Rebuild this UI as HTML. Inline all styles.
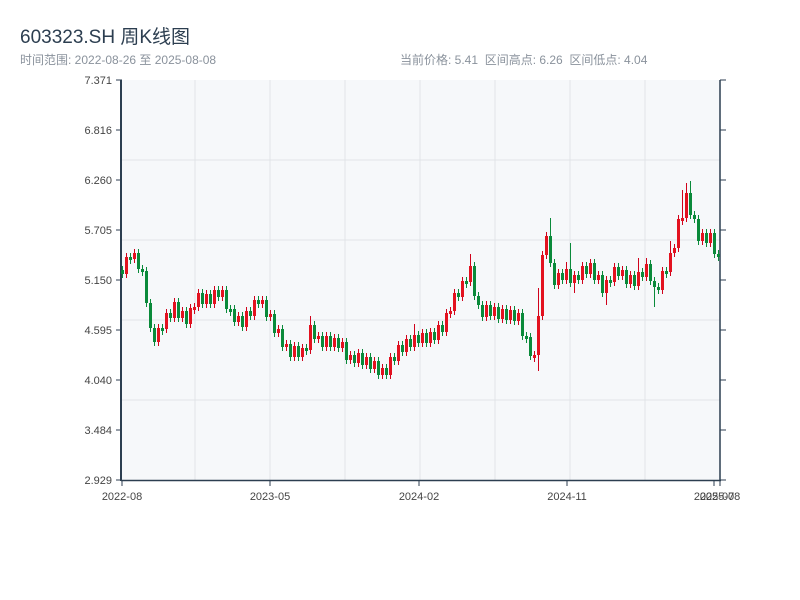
<!DOCTYPE html>
<html><head><meta charset="utf-8"><style>
body{margin:0;background:#fff;width:800px;height:600px;overflow:hidden;font-family:"Liberation Sans","Noto Sans CJK SC",sans-serif}
.t{position:absolute;left:20px;top:22px;font-size:19px;color:#2c3e50}
.s{position:absolute;top:51px;font-size:12px;color:#8a929c}
svg{position:absolute;left:0;top:0}
</style></head><body>
<div class="t">603323.SH 周K线图</div>
<div class="s" style="left:20px">时间范围: 2022-08-26 至 2025-08-08</div>
<div class="s" style="left:400px">当前价格: 5.41&nbsp;&nbsp;区间高点: 6.26&nbsp;&nbsp;区间低点: 4.04</div>
<svg width="800" height="600" font-family="Liberation Sans, sans-serif" font-size="11" fill="#444">
<rect x="122" y="80" width="598" height="400" fill="#f6f8fa"/>
<g stroke="#e1e4e8">
<path d="M122 160H720M122 240H720M122 320H720M122 400H720M195 80V480M270 80V480M345 80V480M420 80V480M495 80V480M570 80V480M645 80V480"/>
</g>
<g stroke="#2c3e50">
<path d="M116 80H122M116 130H122M116 180H122M116 230H122M116 280H122M116 330H122M116 380H122M116 430H122M116 480H122M720 80H726M720 130H726M720 180H726M720 230H726M720 280H726M720 330H726M720 380H726M720 430H726M720 480H726M122 480V486M270 480V486M419 480V486M567 480V486M714 480V486M720 480V486"/>
<path d="M121 80V481" stroke-width="2"/>
<path d="M720 80V481M121 480.5H721" stroke-width="1.5"/>
</g>
<g text-anchor="end">
<text x="112" y="84">7.371</text><text x="112" y="134">6.816</text><text x="112" y="184">6.260</text><text x="112" y="234">5.705</text><text x="112" y="284">5.150</text><text x="112" y="334">4.595</text><text x="112" y="384">4.040</text><text x="112" y="434">3.484</text><text x="112" y="484">2.929</text>
</g>
<g text-anchor="middle">
<text x="122" y="500">2022-08</text><text x="270" y="500">2023-05</text><text x="419" y="500">2024-02</text><text x="567" y="500">2024-11</text><text x="714" y="500">2025-07</text><text x="720" y="500">2025-08</text>
</g>
<g stroke="#0a8a3a" fill="none">
<path stroke-width="1" d="M122.5 266V278M130.5 253V264M138.5 249V273M142.5 265V276M146.5 267V307M150.5 299V332M154.5 324V346M162.5 324V335M170.5 309V322M178.5 298V322M186.5 307V328M202.5 289V308M210.5 290V308M218.5 286V301M226.5 286V313M230.5 305V316M234.5 305V326M242.5 312V331M250.5 307V320M258.5 296V308M266.5 296V321M274.5 310V337M282.5 325V351M290.5 340V361M298.5 342V361M306.5 344V355M314.5 321V343M322.5 332V351M330.5 332V351M338.5 334V352M346.5 338V364M354.5 351V367M362.5 349V369M370.5 353V373M378.5 357V379M386.5 364V379M394.5 353V365M402.5 341V356M410.5 335V351M418.5 331V347M426.5 329V347M434.5 328V344M442.5 321V336M458.5 289V301M466.5 277V288M474.5 262V300M478.5 292V309M482.5 301V321M490.5 301V320M498.5 303V323M506.5 305V324M514.5 306V325M522.5 309V340M526.5 332V343M530.5 333V360M550.5 218V267M554.5 259V289M562.5 269V284M570.5 243V287M578.5 271V284M586.5 262V278M594.5 259V284M602.5 271V297M610.5 276V287M618.5 263V280M626.5 266V288M634.5 271V290M642.5 268V281M650.5 260V285M654.5 277V307M658.5 283V294M666.5 267V278M690.5 181V219M694.5 211V223M698.5 215V245M706.5 229V247M714.5 229V258M718.5 250V261"/>
<path stroke-width="3" d="M122.5 270V274M130.5 257V260M138.5 253V269M142.5 269V272M146.5 271V303M150.5 303V328M154.5 328V342M162.5 328V331M170.5 313V318M178.5 302V318M186.5 311V324M202.5 293V304M210.5 294V304M218.5 290V297M226.5 290V309M230.5 309V312M234.5 309V322M242.5 316V327M250.5 311V316M258.5 300V304M266.5 300V317M274.5 314V333M282.5 329V347M290.5 344V357M298.5 346V357M306.5 348V351M314.5 325V339M322.5 336V347M330.5 336V347M338.5 338V348M346.5 342V360M354.5 355V363M362.5 353V365M370.5 357V369M378.5 361V375M386.5 368V375M394.5 357V361M402.5 345V352M410.5 339V347M418.5 335V343M426.5 333V343M434.5 332V340M442.5 325V332M458.5 293V297M466.5 281V284M474.5 266V296M478.5 296V305M482.5 305V317M490.5 305V316M498.5 307V319M506.5 309V320M514.5 310V321M522.5 313V336M526.5 336V339M530.5 337V356M550.5 236V263M554.5 263V285M562.5 273V280M570.5 269V283M578.5 275V280M586.5 266V274M594.5 263V280M602.5 275V293M610.5 280V283M618.5 267V276M626.5 270V284M634.5 275V286M642.5 272V277M650.5 264V281M654.5 281V287M658.5 287V290M666.5 271V274M690.5 193V215M694.5 215V219M698.5 219V241M706.5 233V243M714.5 233V254M718.5 254V257"/>
</g>
<g stroke="#d0021b" fill="none">
<path stroke-width="1" d="M126.5 253V278M134.5 249V263M158.5 324V346M166.5 309V333M174.5 298V322M182.5 307V322M190.5 304V328M194.5 303V314M198.5 289V311M206.5 290V308M214.5 286V308M222.5 286V301M238.5 312V326M246.5 307V331M254.5 296V320M262.5 296V308M270.5 310V321M278.5 325V337M286.5 340V351M294.5 342V361M302.5 344V361M310.5 316V354M318.5 332V343M326.5 332V351M334.5 334V351M342.5 338V352M350.5 351V364M358.5 349V367M366.5 353V369M374.5 357V373M382.5 364V379M390.5 353V379M398.5 341V365M406.5 335V356M414.5 324V351M422.5 329V347M430.5 328V347M438.5 321V344M446.5 309V336M450.5 307V318M454.5 289V315M462.5 277V301M470.5 254V286M486.5 301V321M494.5 303V320M502.5 305V323M510.5 306V324M518.5 309V325M534.5 351V362M538.5 288V371M542.5 251V320M546.5 232V259M558.5 269V289M566.5 262V284M574.5 271V293M582.5 262V284M590.5 259V278M598.5 271V284M606.5 276V305M614.5 263V286M622.5 266V280M630.5 271V288M638.5 258V290M646.5 258V281M662.5 267V294M670.5 241V276M674.5 244V257M678.5 215V252M682.5 190V225M686.5 183V222M702.5 229V245M710.5 229V247"/>
<path stroke-width="3" stroke="#e3121f" d="M126.5 257V274M134.5 253V259M158.5 328V342M166.5 313V329M174.5 302V318M182.5 311V318M190.5 308V324M194.5 307V310M198.5 293V307M206.5 294V304M214.5 290V304M222.5 290V297M238.5 316V322M246.5 311V327M254.5 300V316M262.5 300V304M270.5 314V317M278.5 329V333M286.5 344V347M294.5 346V357M302.5 348V357M310.5 325V350M318.5 336V339M326.5 336V347M334.5 338V347M342.5 342V348M350.5 355V360M358.5 353V363M366.5 357V365M374.5 361V369M382.5 368V375M390.5 357V375M398.5 345V361M406.5 339V352M414.5 335V347M422.5 333V343M430.5 332V343M438.5 325V340M446.5 313V332M450.5 311V314M454.5 293V311M462.5 281V297M470.5 266V282M486.5 305V317M494.5 307V316M502.5 309V319M510.5 310V320M518.5 313V321M534.5 355V358M538.5 316V355M542.5 255V316M546.5 236V255M558.5 273V285M566.5 269V280M574.5 275V283M582.5 266V280M590.5 263V274M598.5 275V280M606.5 280V293M614.5 267V282M622.5 270V276M630.5 275V284M638.5 272V286M646.5 264V277M662.5 271V290M670.5 253V272M674.5 248V253M678.5 219V248M682.5 218V221M686.5 193V218M702.5 233V241M710.5 233V243"/>
</g>
</svg>
</body></html>
